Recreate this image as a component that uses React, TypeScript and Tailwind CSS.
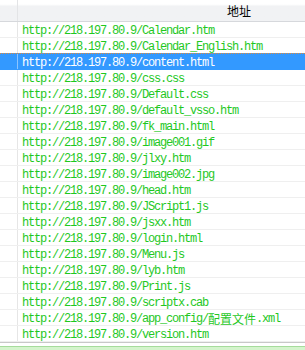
import React from 'react';

const rows: { path: React.ReactNode; selected?: boolean }[] = [
  { path: 'Calendar.htm' },
  { path: 'Calendar_English.htm' },
  { path: 'content.html', selected: true },
  { path: 'css.css' },
  { path: 'Default.css' },
  { path: 'default_vsso.htm' },
  { path: 'fk_main.html' },
  { path: 'image001.gif' },
  { path: 'jlxy.htm' },
  { path: 'image002.jpg' },
  { path: 'head.htm' },
  { path: 'JScript1.js' },
  { path: 'jsxx.htm' },
  { path: 'login.html' },
  { path: 'Menu.js' },
  { path: 'lyb.htm' },
  { path: 'Print.js' },
  { path: 'scriptx.cab' },
  {
    path: (
      <>
        app_config/
        <span
          className="inline-block h-[14px] text-[12px] leading-[13px] tracking-normal align-top"
          style={{ fontFamily: '"Noto Sans CJK SC", sans-serif' }}
        >
          配置文件
        </span>
        .xml
      </>
    ),
  },
  { path: 'version.htm' },
];

export default function App() {
  return (
    <div className="w-[305px] h-[350px] bg-white overflow-hidden flex flex-col">
      {/* column header */}
      <div className="h-[22px] shrink-0 flex bg-gradient-to-b from-white from-20% to-[#f1f2f4] to-30% border-b border-[#d6d8dc]">
        <div className="w-[18px] border-r border-[#e3e4e6]" />
        <div
          className="flex-1 pl-[209px] text-[12px] leading-[21px] text-black"
          style={{ fontFamily: '"Noto Sans CJK SC", sans-serif' }}
        >
          地址
        </div>
      </div>

      {/* rows */}
      <div className="flex flex-col shrink-0">
        {rows.map((r, i) => (
          <div
            key={i}
            className={`flex overflow-hidden border-b ${
              r.selected
                ? 'bg-[#3399ff] text-white border-[#3399ff] border-t border-t-[#e08a3c] border-dotted h-[17px] -mt-px'
                : 'h-[16px] border-[#efefef] text-[#1fc81f]'
            }`}
          >
            <div className={`w-[18px] border-r ${r.selected ? 'border-[#8cc4ff]' : 'border-[#e6e6e6]'}`} />
            <div
              className="flex-1 pl-[4px] pt-[2px] text-[12px] leading-[14px] tracking-[-1.2px] whitespace-nowrap"
              style={{ fontFamily: '"Liberation Mono", "Noto Sans CJK SC", monospace' }}
            >
              http://218.197.80.9/{r.path}
            </div>
          </div>
        ))}
      </div>

      <div className="flex-1 flex">
        <div className="w-[18px] border-r border-[#e6e6e6]" />
      </div>
      <div className="h-px shrink-0 bg-[#c8c8c8]" />
      <div className="h-[3px] shrink-0 bg-white" />
      <div className="h-[4px] shrink-0 bg-[#d4f4cc] border-t border-[#a6dc9c]" />
    </div>
  );
}
